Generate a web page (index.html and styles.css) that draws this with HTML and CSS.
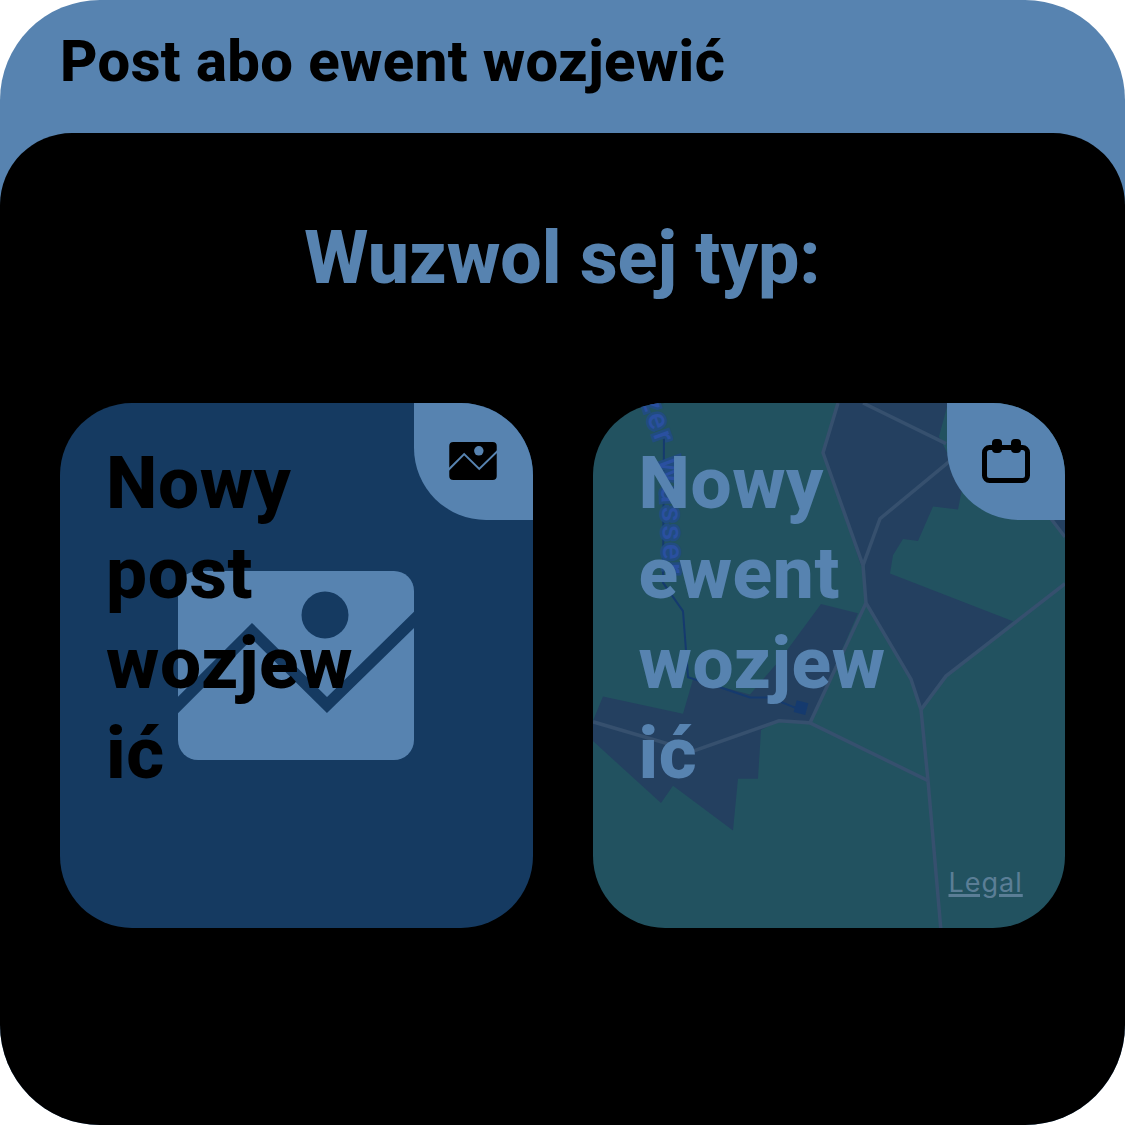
FILE: index.html
```html
<!DOCTYPE html>
<html lang="pl">
<head>
    <meta charset="UTF-8">
    <title>Post abo ewent wozjewić</title>
    <link rel="stylesheet" href="styles.css">
</head>
<body>
    <div class="screen">
        <h1 class="sheet-title">Post abo ewent wozjewić</h1>
        <div class="sheet">
            <h2 class="sheet-prompt">Wuzwol sej typ:</h2>
            <div class="choices">
                <div class="choice choice-post">
                    <svg class="image-icon image-icon-large" viewBox="0 0 236 189">
                        <rect class="image-icon-bg" width="236" height="189" rx="20"/>
                        <circle class="image-icon-cut" cx="147" cy="44" r="23.5"/>
                        <polyline class="image-icon-line" points="-8,142 74,60 149,134 244,41"/>
                    </svg>
                    <p class="choice-label">Nowy post wozjewić</p>
                    <div class="choice-tab">
                        <svg class="image-icon image-icon-small" viewBox="0 0 236 189">
                            <rect class="image-icon-bg" width="236" height="189" rx="20"/>
                            <circle class="image-icon-cut" cx="147" cy="44" r="23.5"/>
                            <polyline class="image-icon-line" points="-8,142 74,60 149,134 244,41"/>
                        </svg>
                    </div>
                </div>
                <div class="choice choice-event">
                    <svg class="map" viewBox="0 0 480 523" preserveAspectRatio="none">
                        <polygon class="map-area" points="245,0 230,49 268,160 272,160 273,197 318,272 328,302 353,269 420,215 297,168 300,150 310,134 325,136 340,102 365,105 370,80 346,33 355,0"/>
                        <polygon class="map-area" points="228,198 265,207 217,315 186,313 168,322 165,370 145,370 140,421 80,377 68,394 0,333 0,313 10,289 90,306 100,272 157,287 187,253"/>
                        <polygon class="map-area" points="458,114 472,130 472,100 455,100"/>
                        <polyline class="map-road" points="245,0 230,49 270,160 273,197 318,272 328,302 335,372 348,520"/>
                        <polyline class="map-road" points="270,160 287,114 357,57"/>
                        <polyline class="map-road" points="270,0 353,40"/>
                        <polyline class="map-road" points="273,197 217,315 186,313 100,343 0,314"/>
                        <polyline class="map-road" points="217,315 335,372"/>
                        <polyline class="map-road" points="328,302 353,269 472,178"/>
                        <polyline class="map-road" points="458,114 472,132"/>
                        <polyline class="map-river" points="71,30 70,177 90,205 95,270 127,280 157,290 177,290 207,302"/>
                        <rect class="map-lock" x="202" y="294" width="12" height="12" transform="rotate(15 208 300)"/>
                        <path id="river-path" class="map-text-path" d="M48,-4 L58,25 L64,42 L68,72 L72,200"/>
                        <text class="map-label"><textPath href="#river-path">zer Wasser</textPath></text>
                    </svg>
                    <p class="choice-label">Nowy ewent wozjewić</p>
                    <span class="map-legal">Legal</span>
                    <div class="choice-tab">
                        <svg class="calendar-icon" viewBox="0 0 48 44">
                            <rect class="calendar-body" x="2.5" y="8.5" width="43" height="33" rx="5"/>
                            <rect class="calendar-ring" x="10" y="0" width="10" height="14" rx="4"/>
                            <rect class="calendar-ring" x="29" y="0" width="10" height="14" rx="4"/>
                        </svg>
                    </div>
                </div>
            </div>
        </div>
    </div>
</body>
</html>
```

FILE: styles.css
```css
body {
    margin: 0;
    background-color: #fff;
    font-family: Roboto, "Liberation Sans", sans-serif;
}
.screen {
    width: 1125px;
    height: 1125px;
    background-color: #5783b0;
    border-radius: 100px;
    overflow: hidden;
    display: flex;
    flex-direction: column;
}
.sheet-title {
    margin: 0;
    height: 133px;
    box-sizing: border-box;
    padding: 26px 0 0 60px;
    font-size: 58px;
    line-height: 70px;
    font-weight: 800;
    letter-spacing: 0.4px;
    color: #000;
}
.sheet {
    flex: 1;
    background-color: #000;
    border-radius: 72px 72px 0 0;
    padding: 0 60px;
}
.sheet-prompt {
    margin: 0;
    height: 270px;
    box-sizing: border-box;
    padding-top: 80px;
    text-align: center;
    font-size: 73.5px;
    line-height: 90px;
    font-weight: 800;
    color: #5783b0;
}
.choices {
    display: flex;
    gap: 60px;
}
.choice {
    position: relative;
    flex: 1;
    height: 525px;
    border-radius: 72px;
    overflow: hidden;
}
.choice-post {
    background-color: #153a61;
    color: #000;
}
.choice-event {
    background-color: #225260;
    color: #5783b0;
}
.choice-label {
    position: relative;
    margin: 0;
    width: 262px;
    padding: 35px 0 0 46px;
    font-size: 73px;
    line-height: 90px;
    font-weight: 800;
    letter-spacing: 0.6px;
    overflow-wrap: anywhere;
}
.choice-tab {
    position: absolute;
    top: 0;
    right: 0;
    width: 118px;
    height: 117px;
    background-color: #5783b0;
    border-bottom-left-radius: 72px;
    display: flex;
    align-items: center;
    justify-content: center;
}
.choice-post .choice-tab {
    width: 119px;
}
.image-icon-large {
    position: absolute;
    left: 118px;
    top: 168px;
    width: 236px;
    height: 189px;
    --icon-bg: #5783b0;
    --icon-cut: #153a61;
    --icon-line-width: 11.5;
}
.image-icon-small {
    width: 48px;
    height: 38px;
    margin-top: -1px;
    --icon-bg: #000;
    --icon-cut: #5783b0;
    --icon-line-width: 10;
}
.image-icon-bg {
    fill: var(--icon-bg);
}
.image-icon-cut {
    fill: var(--icon-cut);
}
.image-icon-line {
    fill: none;
    stroke: var(--icon-cut);
    stroke-width: var(--icon-line-width);
}
.calendar-icon {
    width: 48px;
    height: 44px;
    margin-top: -1px;
}
.calendar-body {
    fill: none;
    stroke: #000;
    stroke-width: 5;
}
.calendar-ring {
    fill: #000;
}
.map {
    position: absolute;
    left: 0;
    top: 0;
    width: 480px;
    height: 531px;
}
.map-area {
    fill: #244060;
}
.map-road {
    fill: none;
    stroke: #36506e;
    stroke-width: 3.5;
}
.map-river {
    fill: none;
    stroke: #153a6e;
    stroke-width: 2;
}
.map-lock {
    fill: #153a6e;
}
.map-text-path {
    fill: none;
}
.map-label {
    font-size: 29px;
    font-weight: 500;
    letter-spacing: 3.5px;
    fill: #2a50a0;
    stroke: #214c80;
    stroke-width: 5;
    paint-order: stroke;
}
.map-legal {
    position: absolute;
    left: 356px;
    top: 464px;
    font-family: Inter, sans-serif;
    font-size: 27px;
    line-height: 32px;
    letter-spacing: 1px;
    color: #5b7e96;
    text-decoration: underline 3px;
}
```
